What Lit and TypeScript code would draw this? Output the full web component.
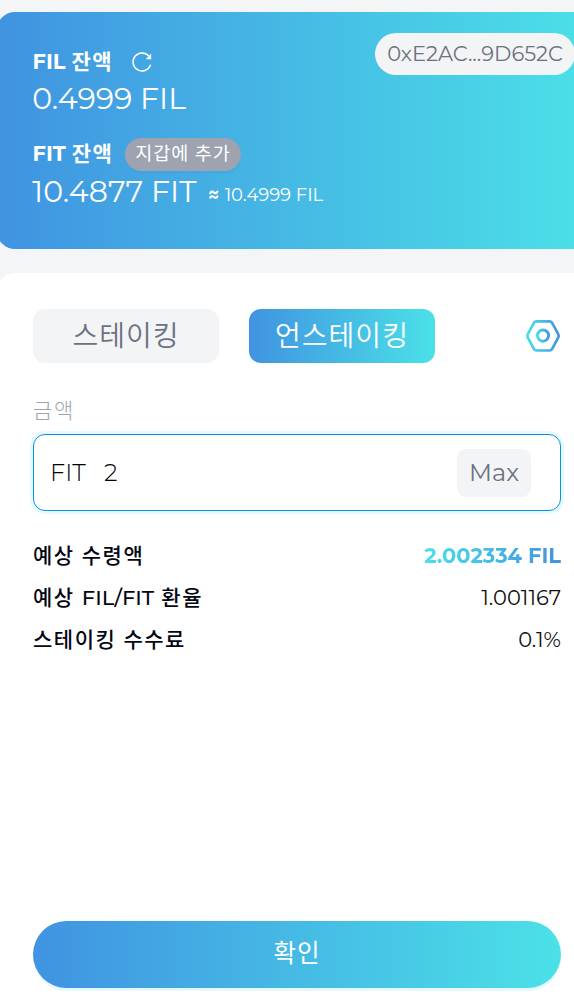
import { LitElement, html, css } from "lit";
import { customElement, state } from "lit/decorators.js";

@customElement("app-root")
export class AppRoot extends LitElement {
  static styles = css`
    :host {
      display: flex;
      flex-direction: column;
      gap: 24px;
      box-sizing: border-box;
      width: 100%;
      height: 1003px;
      padding-top: 12px;
      overflow: hidden;
      background: #f4f5f7;
      color: #000;
      font-family: Montserrat, Inter, "Noto Sans CJK KR", sans-serif;
      font-weight: 350;
      white-space: nowrap;
    }
    .balance {
      display: flex;
      justify-content: space-between;
      align-items: flex-start;
      box-sizing: border-box;
      height: 237px;
      flex: none;
      margin: 0 -20px 0 -3px;
      padding: 21px 19px 0 36px;
      border-radius: 18px;
      background: linear-gradient(90deg, #4093e1, #4be1e8 597px);
      color: #fff;
    }
    .figures { display: flex; flex-direction: column; padding-top: 11px; }
    .row { display: flex; align-items: center; height: 36px; line-height: 36px; }
    .row.second { margin-top: 19px; }
    .row.total { margin-top: 2px; }
    .row.fil { margin-top: 1px; }
    .caption { font-size: 21px; font-weight: 700; width: 80px; margin-left: -0.5px; margin-right: 0.5px; }
    .caption .ko { letter-spacing: 1.5px; }
    .amount { font-size: 30px; font-weight: 400; }
    .fil { margin-left: -0.7px; }
    .refresh { margin-left: 18px; }
    .fit { width: 176px; margin-left: -0.7px; }
    .approx { font-size: 18px; font-weight: 400; padding-top: 5px; }
    .approx b { margin-right: 0.8px; }
    .add {
      height: 33px;
      line-height: 31px;
      margin-left: 12px;
      width: 116px;
      border-radius: 17px;
      background: #9ea3af;
      box-shadow: 0 3px 0 rgba(60, 160, 225, 0.35);
      text-align: center;
      font-size: 18.5px;
      font-weight: 400;
      letter-spacing: 0.9px;
    }
    .address {
      width: 200px;
      height: 42px;
      line-height: 42px;
      border-radius: 21px;
      background: #f3f4f6;
      color: #6b7280;
      text-align: center;
      font-size: 21px;
      font-weight: 400;
    }
    .panel {
      flex: 1;
      display: flex;
      flex-direction: column;
      box-sizing: border-box;
      margin: 0 -20px 0 -3px;
      padding: 36px 33px 15px 36px;
      border-radius: 18px 18px 0 0;
      background: #fff;
    }
    .tabs { display: flex; align-items: center; gap: 30px; }
    .tab {
      width: 186px;
      height: 54px;
      line-height: 54px;
      border-radius: 12px;
      background: #f3f4f6;
      color: #6b7280;
      text-align: center;
      font-size: 28px;
      letter-spacing: 1px;
    }
    .tab.active { background: linear-gradient(90deg, #4093e1, #4be1e8); color: #fff; }
    .settings { margin-left: auto; margin-right: 0; }
    .label {
      margin-top: 33px;
      height: 30px;
      line-height: 30px;
      font-size: 21px;
      font-weight: 300;
      letter-spacing: 1.8px;
      color: #9ca3af;
    }
    .field {
      display: flex;
      align-items: center;
      box-sizing: border-box;
      height: 77px;
      margin-top: 8px;
      padding: 0 29px 0 16px;
      border: 1px solid #0693e3;
      border-radius: 12px;
      box-shadow: 0 0 0 3px #e6f9ff;
      font-size: 24px;
      font-weight: 300;
    }
    .unit { width: 54px; }
    .value { flex: 1; }
    .max {
      width: 74px;
      height: 48px;
      line-height: 48px;
      border-radius: 9px;
      background: #f3f4f6;
      color: #6b7280;
      text-align: center;
      font-weight: 400;
    }
    .details { display: flex; flex-direction: column; margin-top: 24px; }
    .detail { display: flex; justify-content: space-between; height: 42px; line-height: 42px; font-size: 21px; }
    .detail:first-child { line-height: 41px; }
    .name { font-weight: 500; color: #030712; }
    .name .ko { letter-spacing: 1.5px; }
    .number { font-weight: 400; color: #111; }
    .receive {
      font-weight: 700;
      background: linear-gradient(90deg, #4be1e8, #4093e1);
      -webkit-background-clip: text;
      background-clip: text;
      color: transparent;
    }
    .confirm {
      margin-top: auto;
      height: 67px;
      line-height: 65px;
      border-radius: 34px;
      background: linear-gradient(90deg, #4093e1, #4be1e8);
      box-shadow: 0 3px 0 #e6f9ff;
      color: #fff;
      text-align: center;
      font-size: 24.5px;
      font-weight: 400;
      letter-spacing: 1px;
    }
  `;

  @state() private amount = "2";

  render() {
    return html`
      <section class="balance">
        <div class="figures">
          <div class="row">
            <span class="caption">FIL <span class="ko">잔액</span></span>
            <svg class="refresh" width="22" height="22" viewBox="0 0 22 22" fill="none">
              <path d="M19.4 14.2A9 9 0 1 1 17.8 5" stroke="#fff" stroke-width="1.5" stroke-linecap="round" />
              <path d="M20.2 2.6V8.2h-5.4z" fill="#fff" />
            </svg>
          </div>
          <div class="row amount fil">0.4999 FIL</div>
          <div class="row second">
            <span class="caption">FIT <span class="ko">잔액</span></span>
            <span class="add">지갑에 추가</span>
          </div>
          <div class="row total">
            <span class="amount fit">10.4877 FIT</span>
            <span class="approx"><b>≈</b> <span>10.4999 FIL</span></span>
          </div>
        </div>
        <div class="address">0xE2AC...9D652C</div>
      </section>
      <section class="panel">
        <div class="tabs">
          <div class="tab">스테이킹</div>
          <div class="tab active">언스테이킹</div>
          <svg class="settings" width="36" height="36" viewBox="0 0 36 36" fill="none">
            <defs>
              <linearGradient id="ring" gradientUnits="userSpaceOnUse" x1="1" y1="0" x2="35" y2="0">
                <stop stop-color="#4be1e8" /><stop offset="1" stop-color="#4093e1" />
              </linearGradient>
              <linearGradient id="dot" gradientUnits="userSpaceOnUse" x1="11" y1="0" x2="25" y2="0">
                <stop stop-color="#4be1e8" /><stop offset="1" stop-color="#4093e1" />
              </linearGradient>
            </defs>
            <path d="M11.6 3.3H24.4Q26.2 3.3 27.1 4.8L33.2 16.2Q34.2 17.9 33.2 19.6L27.1 31Q26.2 32.5 24.4 32.5H11.6Q9.8 32.5 8.9 31L2.8 19.6Q1.8 17.9 2.8 16.2L8.9 4.8Q9.8 3.3 11.6 3.3Z" stroke="url(#ring)" stroke-width="2.7" />
            <circle cx="18" cy="17.6" r="5.6" stroke="url(#dot)" stroke-width="2.9" />
          </svg>
        </div>
        <div class="label">금액</div>
        <div class="field">
          <span class="unit">FIT</span>
          <span class="value">${this.amount}</span>
          <span class="max">Max</span>
        </div>
        <div class="details">
          <div class="detail"><span class="name"><span class="ko">예상 수령액</span></span><span class="receive">2.002334 FIL</span></div>
          <div class="detail"><span class="name"><span class="ko">예상 </span>FIL/FIT<span class="ko"> 환율</span></span><span class="number">1.001167</span></div>
          <div class="detail"><span class="name"><span class="ko">스테이킹 수수료</span></span><span class="number">0.1%</span></div>
        </div>
        <div class="confirm">확인</div>
      </section>
    `;
  }
}
